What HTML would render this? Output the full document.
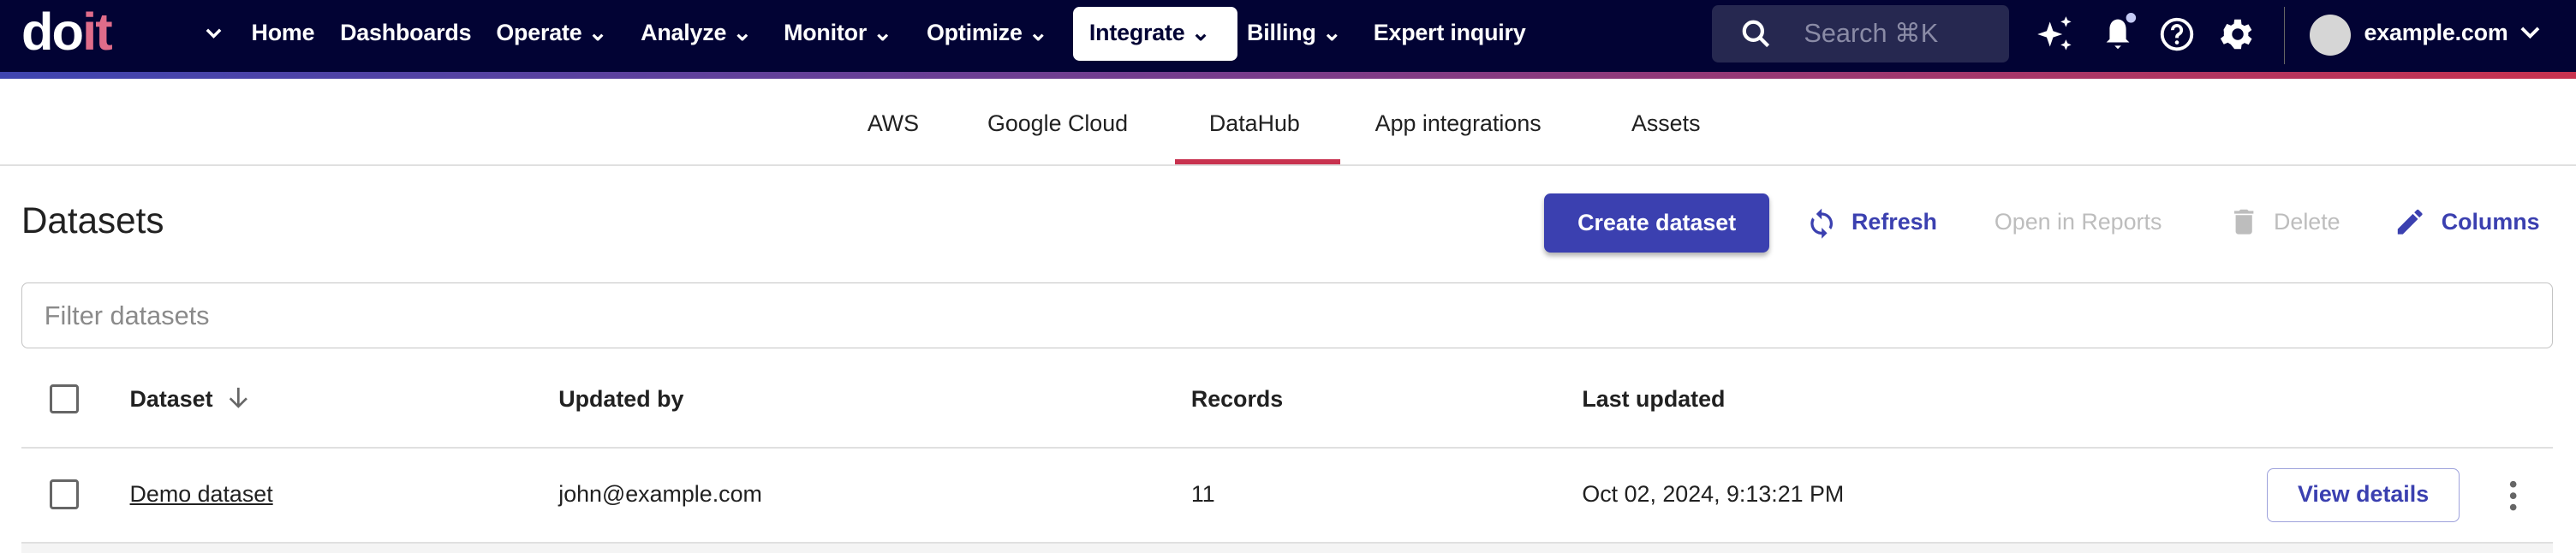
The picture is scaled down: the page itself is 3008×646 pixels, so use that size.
<!DOCTYPE html>
<html><head><meta charset="utf-8"><style>
*{box-sizing:border-box;margin:0;padding:0}
html,body{width:3008px;height:646px;overflow:hidden;background:#fff}
#w{zoom:1.91837;width:1568px;height:337px;position:relative;font-family:"Liberation Sans",sans-serif;color:#212121}
.a{position:absolute;white-space:nowrap}
.nav{position:absolute;left:0;top:0;width:1568px;height:44px;background:#020334}
.grad{position:absolute;left:0;top:44px;width:1568px;height:4px;background:linear-gradient(90deg,#3f45b0,#7a3c8a 50%,#c8324f)}
.ni{position:absolute;top:12px;font-size:14px;color:#fff;font-weight:bold;letter-spacing:-0.1px}
.tab{position:absolute;top:67px;font-size:14px;color:#212121}
.hd{position:absolute;top:235px;font-size:14px;font-weight:bold;color:#212121}
.td{position:absolute;top:293px;font-size:14px;color:#212121}
.cb{position:absolute;width:18px;height:18px;border:2px solid #666;border-radius:2px}
</style></head><body><div id="w">
<div class="nav"></div><div class="grad"></div>
<div class="a" style="left:13px;top:0px;font-size:32px;font-weight:bold;color:#fff;letter-spacing:-1px;line-height:40px">do<span style="color:#e06c8a">it</span></div>
<svg class="a" style="left:124px;top:15px" width="12" height="10" viewBox="0 0 12 10"><path d="M2 3l4 4 4-4" stroke="#fff" stroke-width="1.8" fill="none"/></svg>
<div class="ni" style="left:153px">Home</div>
<div class="ni" style="left:207px">Dashboards</div>
<div class="ni" style="left:302px">Operate ⌄</div>
<div class="ni" style="left:390px">Analyze ⌄</div>
<div class="ni" style="left:477px">Monitor ⌄</div>
<div class="ni" style="left:564px">Optimize ⌄</div>
<div class="a" style="left:653px;top:4px;width:100px;height:33px;background:#fff;border-radius:4px"></div>
<div class="ni" style="left:663px;color:#020334">Integrate ⌄</div>
<div class="ni" style="left:759px">Billing ⌄</div>
<div class="ni" style="left:836px">Expert inquiry</div>
<div class="a" style="left:1042px;top:3px;width:181px;height:35px;background:#262850;border-radius:4px"></div>
<svg class="a" style="left:1059px;top:11px" width="20" height="20" viewBox="0 0 20 20"><circle cx="8" cy="8" r="5.5" stroke="#fff" stroke-width="2.2" fill="none"/><path d="M12 12l5 5" stroke="#fff" stroke-width="2.2"/></svg>
<div class="a" style="left:1098px;top:11px;font-size:16px;color:#8a8ba6">Search ⌘K</div>
<svg class="a" style="left:1238px;top:8px" width="26" height="26" viewBox="0 0 24 24"><path d="M9 5l1.8 5.2L16 12l-5.2 1.8L9 19l-1.8-5.2L2 12l5.2-1.8z M18 2l.9 2.1L21 5l-2.1.9L18 8l-.9-2.1L15 5l2.1-.9z M18 15l.9 2.1L21 18l-2.1.9L18 21l-.9-2.1L15 18l2.1-.9z" fill="#fff"/></svg>
<svg class="a" style="left:1277px;top:8px" width="24" height="26" viewBox="0 0 24 26"><path d="M12 4c-3 0-5 2.5-5 6v6l-2 2h14l-2-2v-6c0-3.5-2-6-5-6z M10 20h4l-2 2z" fill="#fff"/><circle cx="20" cy="3" r="3" fill="#c5cbf5"/></svg>
<svg class="a" style="left:1313px;top:9px" width="24" height="24" viewBox="0 0 24 24"><circle cx="12" cy="12" r="9" stroke="#fff" stroke-width="2" fill="none"/><path d="M9.3 9.5a2.7 2.7 0 1 1 4 2.3c-.9.5-1.3 1-1.3 2v.5" stroke="#fff" stroke-width="2" fill="none"/><circle cx="12" cy="17" r="1.2" fill="#fff"/></svg>
<svg class="a" style="left:1350px;top:9px" width="24" height="24" viewBox="0 0 24 24"><path fill="#fff" d="M19.4 13a7.5 7.5 0 0 0 0-2l2.1-1.6-2-3.5-2.5 1a7 7 0 0 0-1.7-1L15 3h-4l-.4 2.7a7 7 0 0 0-1.700 1l-2.5-1-2 3.5L4.6 11a7.5 7.5 0 0 0 0 2l-2.1 1.6 2 3.5 2.5-1a7 7 0 0 0 1.7 1L11 21h4l.4-2.7a7 7 0 0 0 1.7-1l2.5 1 2-3.5zM13 15.5a3.5 3.5 0 1 1 0-7 3.5 3.5 0 0 1 0 7z" transform="translate(-1 0)"/></svg>
<div class="a" style="left:1390px;top:4px;width:1px;height:35px;background:#666"></div>
<div class="a" style="left:1406px;top:9px;width:25px;height:25px;border-radius:50%;background:#d6d6d6"></div>
<div class="ni" style="left:1439px;top:12px">example.com</div>
<svg class="a" style="left:1533px;top:15px" width="14" height="10" viewBox="0 0 14 10"><path d="M2 2l5 5 5-5" stroke="#fff" stroke-width="2" fill="none"/></svg>

<div class="tab" style="left:528px">AWS</div>
<div class="tab" style="left:601px">Google Cloud</div>
<div class="tab" style="left:736px">DataHub</div>
<div class="tab" style="left:837px">App integrations</div>
<div class="tab" style="left:993px">Assets</div>
<div class="a" style="left:715px;top:97px;width:101px;height:3px;background:#c8324f"></div>
<div class="a" style="left:0;top:100px;width:1568px;height:1px;background:#e0e0e0"></div>

<div class="a" style="left:13px;top:122px;font-size:22px;color:#212121">Datasets</div>
<div class="a" style="left:940px;top:118px;width:137px;height:36px;background:#3b40b0;border-radius:4px;box-shadow:0 2px 3px rgba(0,0,0,.3);color:#fff;font-size:14px;font-weight:bold;text-align:center;line-height:36px">Create dataset</div>
<svg class="a" style="left:1099px;top:126px" width="20" height="20" viewBox="0 0 24 24"><path fill="#3b40b0" d="M12 4V1L8 5l4 4V6c3.3 0 6 2.7 6 6 0 1-.3 2-.7 2.8l1.5 1.5A8 8 0 0 0 12 4zm0 14c-3.3 0-6-2.7-6-6 0-1 .3-2 .7-2.8L5.2 7.7A8 8 0 0 0 12 20v3l4-4-4-4z"/></svg>
<div class="a" style="left:1127px;top:127px;font-size:14px;font-weight:bold;color:#3b40b0">Refresh</div>
<div class="a" style="left:1214px;top:127px;font-size:14px;color:#bdbdbd">Open in Reports</div>
<svg class="a" style="left:1356px;top:125px" width="20" height="20" viewBox="0 0 24 24"><path fill="#bdbdbd" d="M6 19c0 1.1.9 2 2 2h8a2 2 0 0 0 2-2V7H6zM19 4h-3.5l-1-1h-5l-1 1H5v2h14z"/></svg>
<div class="a" style="left:1384px;top:127px;font-size:14px;color:#bdbdbd">Delete</div>
<svg class="a" style="left:1457px;top:125px" width="20" height="20" viewBox="0 0 24 24"><path fill="#3b40b0" d="M3 17.25V21h3.75L17.8 9.940l-3.75-3.75zM20.7 7.04a1 1 0 0 0 0-1.41l-2.34-2.34a1 1 0 0 0-1.41 0l-1.83 1.83 3.75 3.75z"/></svg>
<div class="a" style="left:1486px;top:127px;font-size:14px;font-weight:bold;color:#3b40b0">Columns</div>

<div class="a" style="left:13px;top:172px;width:1541px;height:40px;border:1px solid #c4c4c4;border-radius:4px"></div>
<div class="a" style="left:27px;top:183px;font-size:16px;color:#8a8a8a">Filter datasets</div>

<div class="cb" style="left:30px;top:234px"></div>
<div class="hd" style="left:79px">Dataset</div>
<svg class="a" style="left:137px;top:234px" width="16" height="16" viewBox="0 0 16 16"><path d="M8 2v11M3 8.5l5 5 5-5" stroke="#666" stroke-width="1.4" fill="none"/></svg>
<div class="hd" style="left:340px">Updated by</div>
<div class="hd" style="left:725px">Records</div>
<div class="hd" style="left:963px">Last updated</div>
<div class="a" style="left:13px;top:272px;width:1541px;height:1px;background:#e0e0e0"></div>
<div class="cb" style="left:30px;top:292px"></div>
<div class="td" style="left:79px;text-decoration:underline">Demo dataset</div>
<div class="td" style="left:340px">john@example.com</div>
<div class="td" style="left:725px">11</div>
<div class="td" style="left:963px">Oct 02, 2024, 9:13:21 PM</div>
<div class="a" style="left:1380px;top:285px;width:117px;height:33px;border:1px solid #9ea2dc;border-radius:4px;color:#3b40b0;font-size:14px;font-weight:bold;text-align:center;line-height:31px">View details</div>
<svg class="a" style="left:1526px;top:291px" width="8" height="22" viewBox="0 0 8 22"><circle cx="4" cy="4" r="2" fill="#666"/><circle cx="4" cy="11" r="2" fill="#666"/><circle cx="4" cy="18" r="2" fill="#666"/></svg>
<div class="a" style="left:13px;top:330px;width:1541px;height:1px;background:#e0e0e0"></div>
<div class="a" style="left:13px;top:331px;width:1541px;height:6px;background:#f4f4f4"></div>
</div></body></html>
